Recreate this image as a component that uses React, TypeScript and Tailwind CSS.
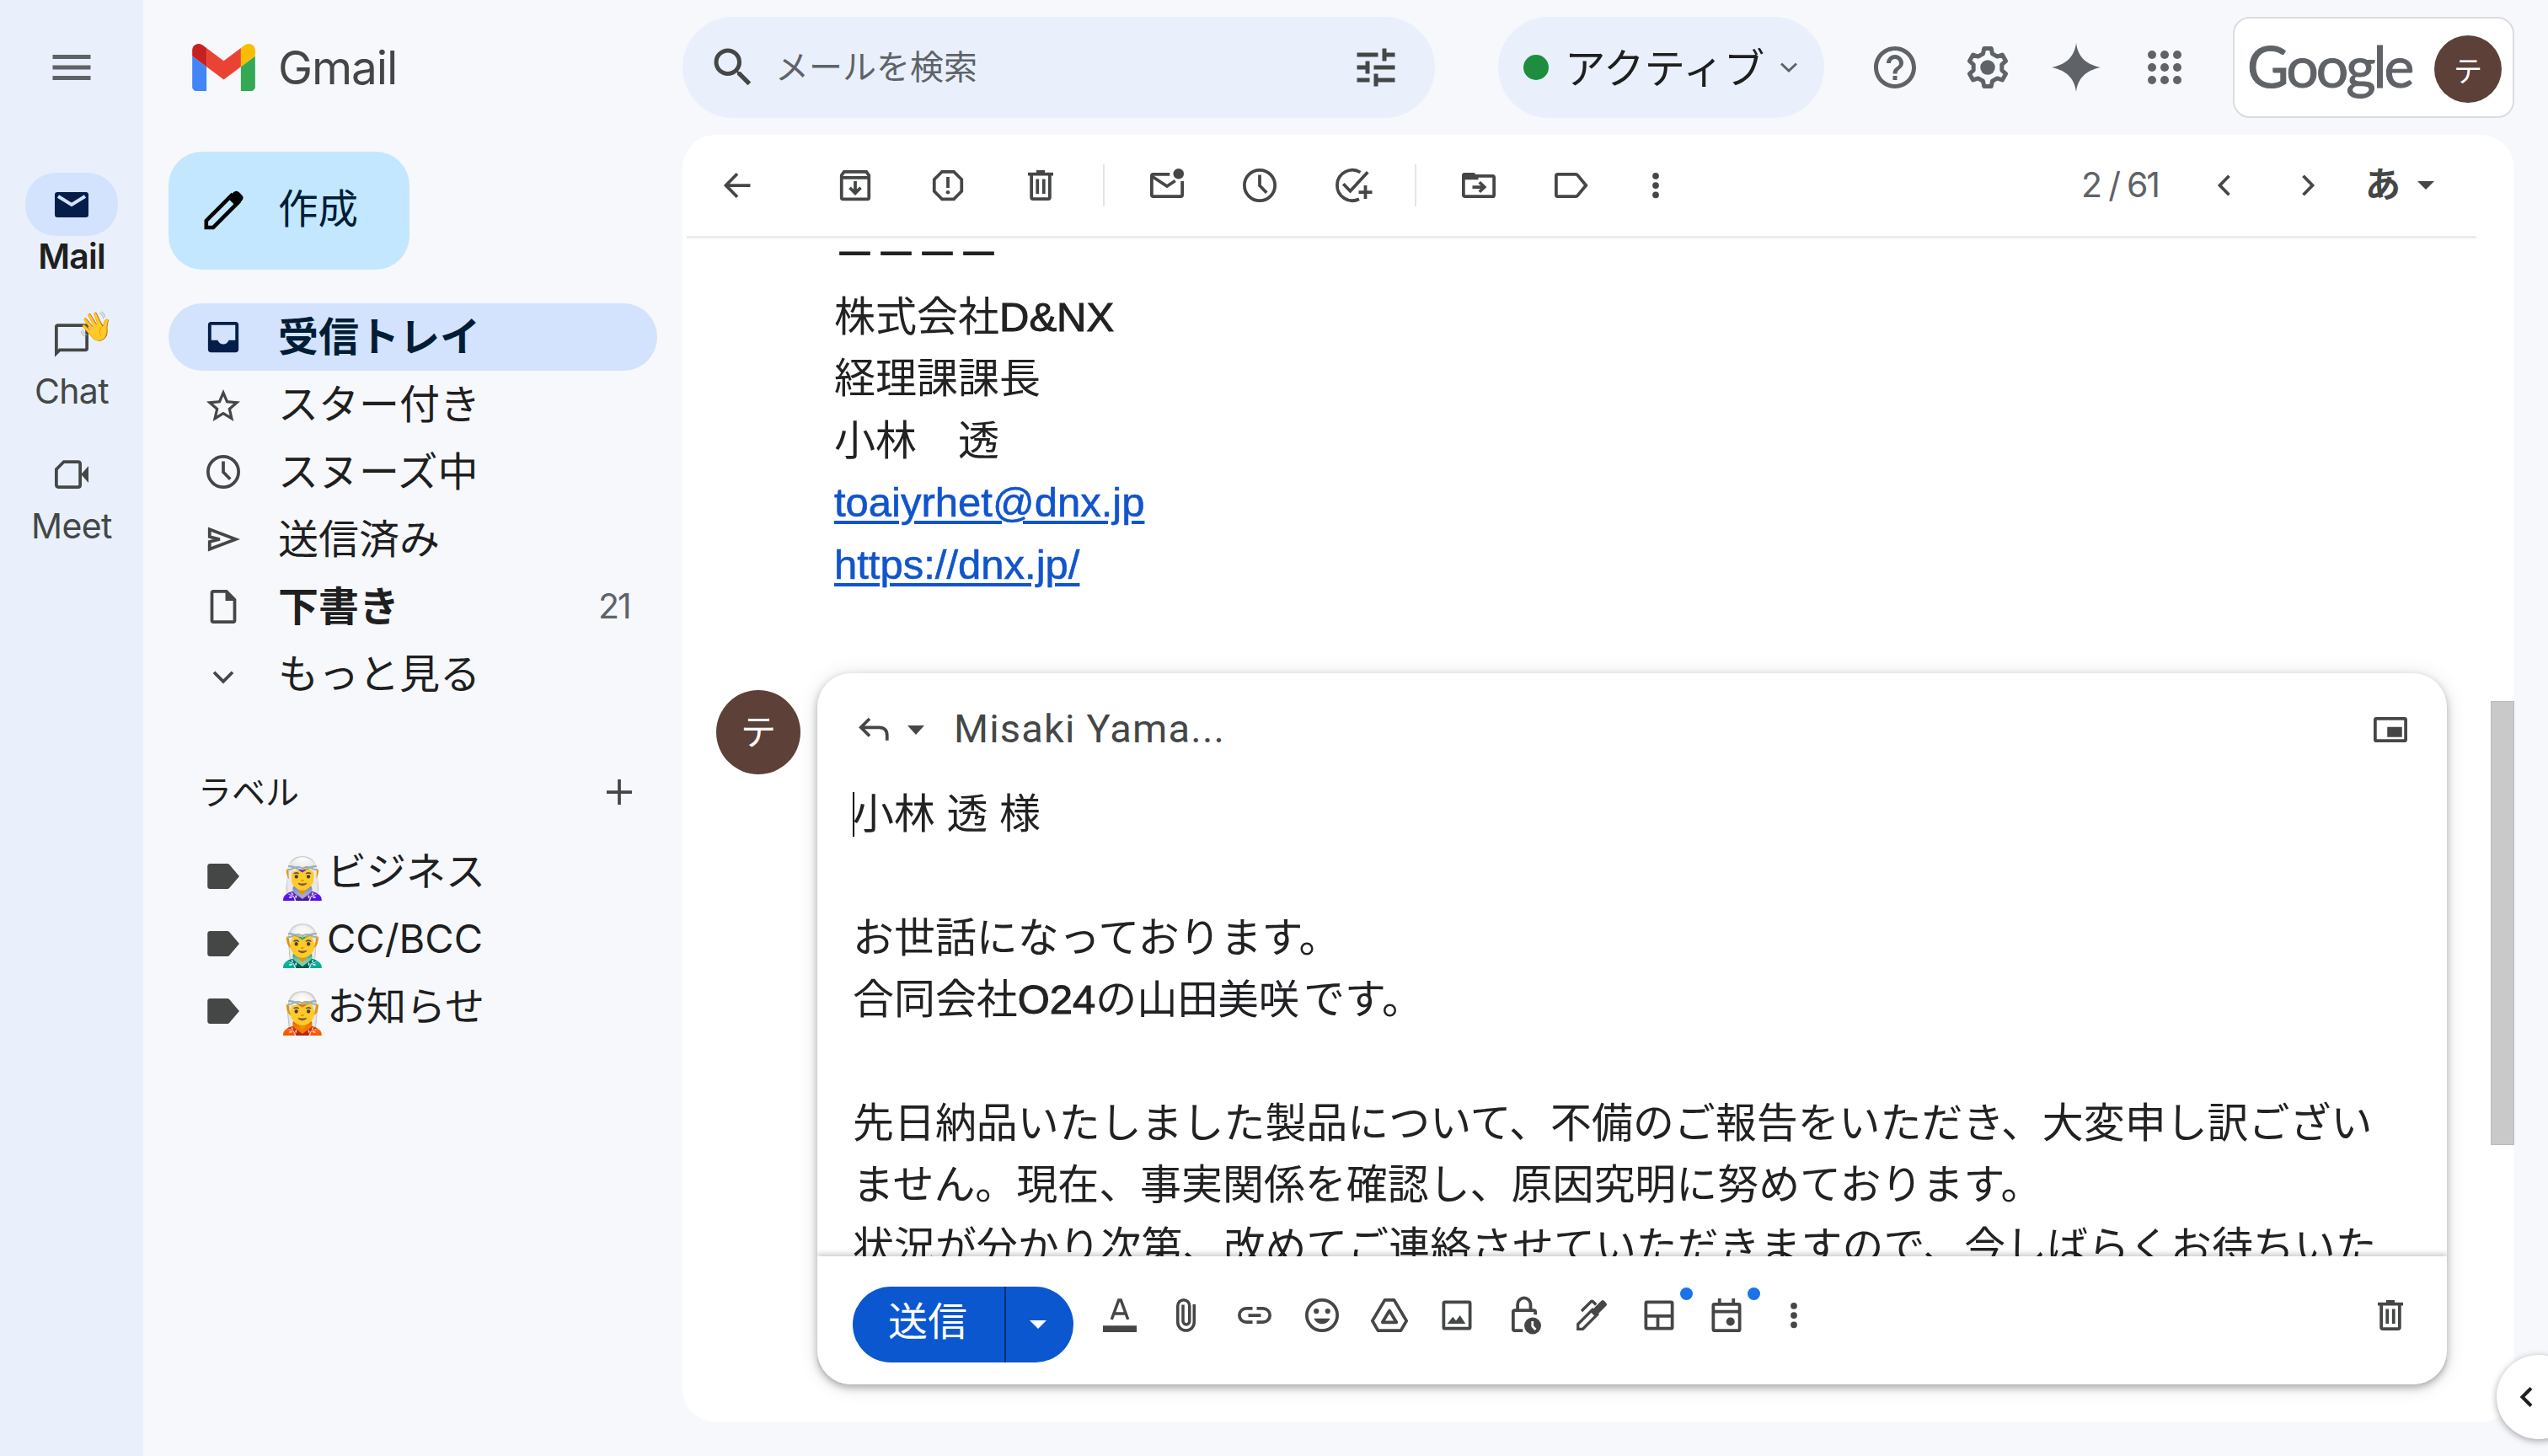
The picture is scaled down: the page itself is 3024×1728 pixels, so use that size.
import React from 'react';
import { MdHelpOutline, MdMenu, MdSearch, MdStarBorder, MdTune } from 'react-icons/md';

type IconProps = { children: React.ReactNode; className?: string };

// 20-unit icon grid drawn at 50px
const Icon: React.FC<IconProps> = ({ children, className = '' }) => (
  <svg
    viewBox="0 0 20 20"
    className={`w-[50px] h-[50px] shrink-0 overflow-visible ${className}`}
    fill="none"
    stroke="currentColor"
    strokeWidth="1.5"
  >
    {children}
  </svg>
);

const ClockIcon = () => (
  <Icon>
    <circle cx="10" cy="10" r="7.25" />
    <path d="M10 5v5.1l3.3 3.4" />
  </Icon>
);

const TrashIcon = () => (
  <Icon>
    <path d="M4 4.6h12M8 3.5h4" />
    <path d="M5.65 4.6v11.1c0 .45.3.75.75.75h7.2c.45 0 .75-.3.75-.75V4.6" />
    <path d="M8.5 7v7M11.5 7v7" />
  </Icon>
);

const MoreIcon = () => (
  <Icon>
    <g fill="currentColor" stroke="none">
      <circle cx="10" cy="5.5" r="1.55" />
      <circle cx="10" cy="10" r="1.55" />
      <circle cx="10" cy="14.5" r="1.55" />
    </g>
  </Icon>
);

const GearIcon = () => (
  <svg viewBox="0 0 24 24" className="w-[60px] h-[60px]" fill="none" stroke="currentColor" strokeWidth="2" strokeLinejoin="round">
    <path d="M9.8 5.5l.5-2.5h3.4l.5 2.5 2.33 1.34 2.41-.81 1.7 2.94-1.91 1.69v2.68l1.91 1.69-1.7 2.94-2.41-.81-2.33 1.34-.5 2.5h-3.4l-.5-2.5-2.33-1.34-2.41.81-1.7-2.94 1.91-1.69v-2.68L3.36 8.97l1.7-2.94 2.41.81z" />
    <circle cx="12" cy="12" r="3.5" fill="currentColor" stroke="none" />
  </svg>
);

const GmailLogo = () => (
  <svg viewBox="52 42 88 66" className="w-[75px] h-[56px]">
    <path fill="#4285f4" d="M58 108h14V74L52 59v43c0 3.32 2.69 6 6 6" />
    <path fill="#34a853" d="M120 108h14c3.32 0 6-2.69 6-6V59l-20 15" />
    <path fill="#fbbc04" d="M120 48v26l20-15v-8c0-7.42-8.47-11.65-14.4-7.2" />
    <path fill="#ea4335" d="M72 74V48l24 18 24-18v26L96 92" />
    <path fill="#c5221f" d="M52 51v8l20 15V48l-5.6-4.2c-5.94-4.45-14.4-.22-14.4 7.2" />
  </svg>
);

const RailItem: React.FC<{ label: string; bold?: boolean; children: React.ReactNode }> = ({ label, bold, children }) => (
  <div className="flex flex-col items-center h-[160px]">
    {children}
    <span
      className={
        bold
          ? 'mt-[4px] h-[40px] leading-[40px] text-[41px] font-semibold text-[#1f1f1f] tracking-[-0.8px]'
          : 'mt-[4px] h-[40px] leading-[40px] text-[41px] text-[#444746] tracking-[-0.6px]'
      }
    >
      {label}
    </span>
  </div>
);

const Rail = () => (
  <aside className="w-[170px] h-full bg-[#e9f0fc] flex flex-col items-center font-['Inter','Noto_Sans_CJK_JP',sans-serif]">
    <div className="h-[205px] pt-[50px]">
      <MdMenu size={60} className="text-[#5f6368]" />
    </div>
    <RailItem label="Mail" bold>
      <div className="w-[110px] h-[75px] rounded-[36px] bg-[#d3e3fd] flex items-center justify-center">
        <Icon className="text-[#041e49]">
          <rect x="2" y="4" width="16" height="12" rx="1.3" fill="currentColor" stroke="none" />
          <path d="M3.6 6l6.4 4 6.4-4" stroke="#d3e3fd" strokeWidth="1.6" />
        </Icon>
      </div>
    </RailItem>
    <RailItem label="Chat">
      <div className="relative w-[110px] h-[75px] flex items-center justify-center text-[#444746]">
        <Icon>
          <path d="M2.75 16.500V4c0-.4.3-.75.75-.75h13c.4 0 .75.35.75.75v10.200c0 .4-.35.75-.75.75H4.300z" />
        </Icon>
        <span className="absolute left-[62px] top-[2px] text-[34px] leading-[40px]">👋</span>
      </div>
    </RailItem>
    <RailItem label="Meet">
      <div className="w-[110px] h-[75px] flex items-center justify-center text-[#444746]">
        <Icon>
          <path d="M6.300 4H13c.6 0 1.050.45 1.050 1.050v9.900c0 .6-.45 1.050-1.050 1.050H3.800c-.6 0-1.050-.45-1.050-1.050V7.600z" />
          <path d="M14.500 10l3.500-4v8z" fill="currentColor" stroke="none" />
        </Icon>
      </div>
    </RailItem>
  </aside>
);

const Avatar: React.FC<{ className: string }> = ({ className }) => (
  <div className={`rounded-full bg-[#5d4037] text-white flex items-center justify-center shrink-0 ${className}`}>テ</div>
);

const Header = () => (
  <header className="h-[160px] flex items-center">
    <div className="w-[640px] pl-[58px] flex items-center">
      <GmailLogo />
      <span className="ml-[27px] text-[55px] leading-[60px] font-['Inter',sans-serif] text-[#444746] tracking-[-1.1px]">Gmail</span>
    </div>
    <div className="w-[893px] h-[120px] rounded-[60px] bg-[#e9f0fc] flex items-center pl-[30px] pr-[40px] text-[#444746]">
      <MdSearch size={60} />
      <span className="ml-[20px] flex-1 pb-[6px] text-[40px] leading-[60px] text-[#5f6368]">メールを検索</span>
      <MdTune size={60} />
    </div>
    <div className="ml-[75px] w-[387px] h-[120px] rounded-[60px] bg-[#e9f0fc] flex items-center pl-[30px]">
      <span className="w-[30px] h-[30px] rounded-full bg-[#1e8e3e]" />
      <span className="ml-[19px] pb-[4px] text-[48.5px] leading-[70px] text-[#1f1f1f]">アクティブ</span>
      <svg viewBox="0 0 20 12" className="ml-[19px] w-[20px] h-[12px]" fill="none" stroke="#5f6368" strokeWidth="3">
        <path d="M1 1.5l9 8.5 9-8.5" />
      </svg>
    </div>
    <div className="ml-[29px] w-[110px] flex justify-center text-[#5f6368]">
      <MdHelpOutline size={60} />
    </div>
    <div className="w-[110px] flex justify-center text-[#5f6368]">
      <GearIcon />
    </div>
    <div className="w-[100px] flex justify-center">
      <svg viewBox="0 0 58 58" className="w-[58px] h-[58px]" fill="#5f6368">
        <path d="M29 0c2 15 10 25 29 29-19 4-27 14-29 29-2-15-10-25-29-29C19 25 27 15 29 0z" />
      </svg>
    </div>
    <div className="w-[110px] flex justify-center">
      <div className="grid grid-cols-3 gap-[5px]">
        {Array.from({ length: 9 }).map((_, i) => (
          <span key={i} className="w-[10px] h-[10px] rounded-full bg-[#5f6368]" />
        ))}
      </div>
    </div>
    <div className="ml-[26px] w-[334px] h-[120px] rounded-[20px] border-2 border-[#dadce0] bg-white flex items-center justify-between pl-[15px] pr-[13px]">
      <span className="pb-[4px] font-['Lato',sans-serif] text-[68px] leading-[80px] text-[#5f6368] tracking-[-3px] [-webkit-text-stroke:1px_#5f6368]">
        Google
      </span>
      <Avatar className="mt-[4px] w-[80px] h-[80px] text-[34px]" />
    </div>
  </header>
);

const navItems = [
  {
    label: '受信トレイ',
    active: true,
    icon: (
      <Icon className="text-[#041e49]">
        <rect x="2.75" y="2.75" width="14.5" height="14.5" rx="1.5" fill="currentColor" stroke="none" />
        <path d="M4.3 4.3h11.4v7.2h-3.1c-.4 1.2-1.4 1.9-2.6 1.9s-2.2-.7-2.6-1.9H4.3z" fill="#d3e3fd" stroke="none" />
      </Icon>
    ),
  },
  { label: 'スター付き', icon: <MdStarBorder size={48} className="mx-px mt-[3px]" /> },
  { label: 'スヌーズ中', icon: <ClockIcon /> },
  {
    label: '送信済み',
    icon: (
      <Icon>
        <path d="M3.5 5.3v3.5l4.8 1.2-4.8 1.2v3.5L15.9 10z" />
      </Icon>
    ),
  },
  {
    label: '下書き',
    bold: true,
    count: 21,
    icon: (
      <Icon>
        <path d="M5.3 2.75h6.2l3.9 4v9.75c0 .4-.35.75-.75.75H5.35c-.4 0-.75-.35-.75-.75v-13c0-.4.3-.75.7-.75z" />
        <path d="M11 2.5v4.7h5z" fill="currentColor" stroke="none" />
      </Icon>
    ),
  },
  {
    label: 'もっと見る',
    icon: (
      <Icon>
        <path d="M5.6 9.1l4.4 4.4 4.4-4.4" />
      </Icon>
    ),
  },
];

const labels = [
  { emoji: '🧝‍♀️', name: 'ビジネス' },
  { emoji: '🧝‍♂️', name: 'CC/BCC' },
  { emoji: '🧝', name: 'お知らせ' },
];

const Sidebar = () => (
  <nav className="w-[640px] pl-[30px] pr-[30px] pt-[20px] text-[#444746]">
    <button className="w-[286px] h-[140px] rounded-[40px] bg-[#c2e7ff] flex items-center pl-[40px] text-[#001d35]">
      <svg viewBox="0 0 24 24" className="w-[50px] h-[50px]" fill="none" stroke="#000" strokeWidth="2.2">
        <path d="M2.3 21.6v-3.9L16.6 3.4l3.9 3.9L6.2 21.6z" />
        <path d="M15.2 4.8l2.8-2.8c.9-.9 1.9-.9 2.8 0l1.3 1.3c.9.9.9 1.9 0 2.8l-2.8 2.8z" fill="#000" strokeWidth="1" />
      </svg>
      <span className="ml-[40px] pb-[10px] text-[47.5px] leading-[70px]">作成</span>
    </button>
    <ul className="mt-[40px]">
      {navItems.map((item) => (
        <li
          key={item.label}
          className={
            item.active
              ? 'w-[580px] h-[80px] rounded-[40px] bg-[#d3e3fd] flex items-center pl-[40px] pr-[32px]'
              : 'w-[580px] h-[80px] flex items-center pl-[40px] pr-[32px]'
          }
        >
          {item.icon}
          <span
            className={
              item.active
                ? 'ml-[40px] pb-[9px] flex-1 text-[48px] leading-[70px] font-bold text-[#001d35]'
                : item.bold
                  ? 'ml-[40px] pb-[9px] flex-1 text-[48px] leading-[70px] font-bold text-[#1f1f1f]'
                  : 'ml-[40px] pb-[9px] flex-1 text-[48px] leading-[70px] text-[#1f1f1f]'
            }
          >
            {item.label}
          </span>
          {item.count && <span className="font-['Inter',sans-serif] text-[41px] tracking-[-1.8px] text-[#5f6368]">{item.count}</span>}
        </li>
      ))}
    </ul>
    <div className="mt-[60px] h-[80px] flex items-center justify-between pl-[35px] pr-[20px]">
      <span className="pb-[4px] text-[40px] text-[#1f1f1f]">ラベル</span>
      <Icon>
        <path d="M10 4v12M4 10h12" />
      </Icon>
    </div>
    <ul className="mt-[20px]">
      {labels.map((label) => (
        <li key={label.name} className="h-[80px] flex items-center pl-[40px]">
          <Icon>
            <path
              d="M3.7 4h8.1c.6 0 1 .2 1.3.7L17.6 10l-4.5 5.3c-.3.5-.7.7-1.3.7H3.7c-.7 0-1.2-.5-1.2-1.2V5.200C2.5 4.500 3 4 3.700 4z"
              fill="currentColor"
              stroke="none"
            />
          </Icon>
          <span className="ml-[39px] w-[59px] pb-[5px] text-[48px] leading-[60px] whitespace-nowrap">{label.emoji}</span>
          <span className="pb-[12px] text-[47px] leading-[60px] text-[#1f1f1f] font-['Inter','Noto_Sans_CJK_JP',sans-serif]">{label.name}</span>
        </li>
      ))}
    </ul>
  </nav>
);

const Tool: React.FC<{ children: React.ReactNode }> = ({ children }) => (
  <div className="w-[110px] flex justify-center">{children}</div>
);

const Divider = () => (
  <div className="w-[40px] flex justify-center">
    <span className="w-[2px] h-[50px] bg-[#e4e5e8]" />
  </div>
);

const Toolbar = () => (
  <div className="mx-[5px] mr-[45px] h-[123px] shrink-0 border-b-[3px] border-[#ececec] flex items-center pr-[50px] text-[#444746]">
    <div className="w-[145px] pl-[35px]">
      <Icon>
        <path d="M16.2 10H4.7M10 4.5L4.6 10l5.4 5.5" />
      </Icon>
    </div>
    <Tool>
      <Icon>
        <path d="M4.7 3.55h10.6l1.2 1.7v10.5c0 .4-.35.75-.75.75H4.25c-.4 0-.75-.35-.75-.75V5.25z" />
        <path d="M3.5 6.3h13M10 8v5.2M7.4 11.1l2.6 2.6 2.6-2.6" />
      </Icon>
    </Tool>
    <Tool>
      <Icon>
        <path d="M7.2 3.5h5.6l3.7 3.7v5.6l-3.7 3.7H7.2l-3.7-3.7V7.2z" />
        <path d="M10 6v5.2" />
        <circle cx="10" cy="13.3" r=".9" fill="currentColor" stroke="none" />
      </Icon>
    </Tool>
    <Tool>
      <TrashIcon />
    </Tool>
    <Divider />
    <Tool>
      <Icon>
        <path d="M11.3 4.75H3.5c-.4 0-.75.35-.75.75v9c0 .4.35.75.75.75h13c.4 0 .75-.35.75-.75V8" />
        <path d="M3 5.8l7 4.6 3.9-2.6" />
        <circle cx="15.5" cy="4.5" r="2.5" fill="currentColor" stroke="none" />
      </Icon>
    </Tool>
    <Tool>
      <ClockIcon />
    </Tool>
    <Tool>
      <Icon>
        <path d="M13.8 3.8A7.25 7.25 0 1 0 13.2 16.5" />
        <path d="M5.7 9.3l3.3 3.4 8.3-9M16.2 10v6.4M13 13.2h6.4" />
      </Icon>
    </Tool>
    <Divider />
    <Tool>
      <Icon>
        <rect x="2.75" y="5.5" width="14.5" height="9.75" rx=".7" />
        <path d="M2 7.3V5.2C2 4.5 2.5 4 3.2 4h4.6l2 2v1.3z" fill="currentColor" stroke="none" />
        <path d="M7 10.8h5.2M10.3 8.5l2.4 2.3-2.4 2.3" />
      </Icon>
    </Tool>
    <Tool>
      <Icon>
        <path d="M3.5 4.75h8.6c.35 0 .6.15.8.4l4 4.85-4 4.85c-.2.25-.45.4-.8.4H3.5c-.4 0-.75-.35-.75-.75v-9c0-.4.35-.75.75-.75z" />
      </Icon>
    </Tool>
    <div className="w-[90px] flex justify-center">
      <MoreIcon />
    </div>
    <span className="ml-auto w-[92px] mr-[53px] whitespace-nowrap font-['Inter',sans-serif] text-[41px] tracking-[-2.2px] text-[#5f6368]">2 / 61</span>
    <Icon>
      <path d="M12.2 5.5L7.8 10l4.4 4.5" />
    </Icon>
    <Icon className="ml-[49px]">
      <path d="M7.8 5.5l4.4 4.5-4.4 4.5" />
    </Icon>
    <div className="ml-[43px] w-[43px] text-[42px] leading-[44px] font-bold">あ</div>
    <svg viewBox="0 0 20 10" className="ml-[19px] w-[20px] h-[10px]" fill="#444746">
      <path d="M0 0h20L10 10z" />
    </svg>
  </div>
);

const Signature = () => (
  <div className="h-[516px] overflow-hidden pl-[180px] shrink-0">
    <div className="-mt-[17px] text-[49px] leading-[73.5px] text-[#222]">
      <p className="[-webkit-text-stroke:1px_#222]">－－－－</p>
      <p>
        株式会社<span className="[-webkit-text-stroke:1px_#222]">D&amp;NX</span>
      </p>
      <p>経理課課長</p>
      <p>小林　透</p>
      <p>
        <a href="#" className="text-[#1155cc] underline decoration-[4px] underline-offset-[5px] [-webkit-text-stroke:0.6px_#1155cc]">toaiyrhet@dnx.jp</a>
      </p>
      <p>
        <a href="#" className="text-[#1155cc] underline decoration-[4px] underline-offset-[5px] [-webkit-text-stroke:0.6px_#1155cc]">https://dnx.jp/</a>
      </p>
    </div>
  </div>
);

const ComposeBar = () => (
  <div className="relative h-[152px] shrink-0 rounded-b-[40px] bg-white flex items-start pl-[42px] pr-[42px] pt-[36px] text-[#444746] shadow-[0_-3px_6px_rgba(0,0,0,0.2)] [clip-path:inset(-20px_0_0_0)]">
    <div className="h-[90px] w-[262px] rounded-[45px] bg-[#0b57d0] flex items-center text-white">
      <span className="w-[180px] pl-[42px] text-[47px] leading-[80px] pb-[6px]">送信</span>
      <span className="w-[2px] h-full bg-[#062e6f]" />
      <svg viewBox="0 0 20 10" className="ml-[28px] w-[20px] h-[10px]" fill="#fff">
        <path d="M0 0h20L10 10z" />
      </svg>
    </div>
    <div className="ml-[15px] mt-[9px] flex items-center">
      {composeTools.map((tool, i) => (
        <div key={i} className="relative w-[80px] flex justify-center">
          <Icon>{tool.icon}</Icon>
          {tool.badge && <span className="absolute right-0 -top-[8px] w-[15px] h-[15px] rounded-full bg-[#1a73e8]" />}
        </div>
      ))}
      <div className="w-[80px] flex justify-center">
        <MoreIcon />
      </div>
    </div>
    <div className="ml-auto mt-[9px]">
      <TrashIcon />
    </div>
  </div>
);

const composeTools = [
  {
    icon: (
      <>
        <rect x="2" y="14.9" width="16" height="3.1" fill="currentColor" stroke="none" />
        <path d="M6.1 12L9.5 2.8h1L13.9 12M7.2 9.2h5.6" strokeWidth="1.4" />
      </>
    ),
  },
  {
    icon: (
      <path d="M13.3 4.8v8.5a3.9 3.9 0 0 1-7.8 0V5.5a2.8 2.8 0 0 1 5.6 0v7.3a1.55 1.55 0 0 1-3.1 0V5" strokeWidth="1.4" />
    ),
  },
  {
    icon: <path d="M9 6.75H6a3.25 3.25 0 0 0 0 6.5h3M11 6.75h3a3.25 3.25 0 0 1 0 6.5h-3M7 10h6" />,
  },
  {
    icon: (
      <>
        <circle cx="10" cy="10" r="7.25" />
        <g fill="currentColor" stroke="none">
          <circle cx="7.3" cy="8" r="1.25" />
          <circle cx="12.7" cy="8" r="1.25" />
          <path d="M6.2 11.5h7.6c-.6 1.6-2 2.6-3.8 2.6s-3.2-1-3.8-2.6z" />
        </g>
      </>
    ),
  },
  {
    icon: (
      <>
        <path d="M7.8 2.75h4.4l5.9 9.9-2.7 4.6H4.6l-2.7-4.6z" strokeLinejoin="round" />
        <path d="M10 7.8l-3.3 5.5h6.6z" strokeLinejoin="round" />
      </>
    ),
  },
  {
    icon: (
      <>
        <rect x="3.75" y="3.75" width="12.5" height="12.5" rx=".6" />
        <path d="M5.5 14l2.6-3.3 1.5 1.9 1.9-2.6 2.6 4z" fill="currentColor" stroke="none" />
      </>
    ),
  },
  {
    icon: (
      <>
        <path d="M9.3 17.25H5.5c-.4 0-.75-.35-.75-.75V8.4c0-.4.35-.75.75-.75h9c.4 0 .75.35.75.75v1.3" />
        <path d="M6.85 7.6V4.7a3.08 3.08 0 0 1 6.15 0v2.9" />
        <circle cx="14" cy="15" r="4" fill="currentColor" stroke="none" />
        <path d="M13.9 12.8v2.4l1.5 1.6" stroke="#fff" strokeWidth="1.1" />
      </>
    ),
  },
  {
    icon: (
      <>
        <path d="M3.5 16.5v-2.3l6.9-6.9 2.3 2.3-6.9 6.9z" strokeWidth="1.3" />
        <path d="M9.4 8.3l5.2-5.2c.4-.4.9-.4 1.300 0l1 1.100c.4.4.4.9 0 1.300l-5.200 5.200z" fill="currentColor" stroke="none" />
        <path d="M5.200 8l4.500-4.500c.3-.3.6-.3.9 0l1.500 1.500" strokeWidth="1.3" />
      </>
    ),
  },
  {
    badge: true,
    icon: (
      <>
        <rect x="3.75" y="3.75" width="12.5" height="12.5" rx=".6" />
        <path d="M3.5 10.3h13M9.4 10.3v6" />
      </>
    ),
  },
  {
    badge: true,
    icon: (
      <>
        <rect x="3.75" y="4.75" width="12.5" height="12.5" rx=".6" />
        <path d="M3.5 8.2h13M6.7 2v3M13.3 2v3" />
        <circle cx="11.9" cy="13" r="2" fill="currentColor" stroke="none" />
      </>
    ),
  },
];

const Composer = () => (
  <div className="w-[1934px] h-[844px] rounded-[40px] bg-white flex flex-col shadow-[0_4px_10px_rgba(0,0,0,0.28),0_2px_24px_rgba(0,0,0,0.12)]">
    <div className="h-[140px] pt-[42px] pl-[42px] pr-[42px] flex items-start text-[#444746]">
      <Icon>
        <path d="M8 4.8L3.9 8.9 8 13M3.9 8.9h8.6c2.6 0 3.8 1.5 3.8 3.7v2.5" />
      </Icon>
      <svg viewBox="0 0 20 11" className="ml-[15px] mt-[20px] w-[20px] h-[11px]" fill="#444746">
        <path d="M0 0h20L10 11z" />
      </svg>
      <span className="ml-[35px] -mt-px font-['Roboto',sans-serif] text-[47px] leading-[50px] tracking-[1.2px]">Misaki Yama...</span>
      <Icon className="ml-auto">
        <rect x="2.75" y="4.75" width="14.5" height="10.5" rx=".6" />
        <rect x="8.5" y="8.7" width="7" height="4.8" fill="currentColor" stroke="none" />
      </Icon>
    </div>
    <div className="flex-1 min-h-0 -mt-[9px] pl-[42px] overflow-hidden text-[48.95px] leading-[73.4px] text-[#222] whitespace-nowrap">
      <p className="flex items-center">
        <span className="w-[2px] h-[53px] -mr-[2px] bg-black" />
        小林 透 様
      </p>
      <p>&nbsp;</p>
      <p>お世話になっております。</p>
      <p>
        合同会社<span className="[-webkit-text-stroke:1px_#222]">O24</span>の
        <span className="text-[#202124] text-[48.2px] mr-[5px]">山田美咲</span>です。
      </p>
      <p>&nbsp;</p>
      <p>先日納品いたしました製品について、不備のご報告をいただき、大変申し訳ござい</p>
      <p>ません。現在、事実関係を確認し、原因究明に努めております。</p>
      <p>状況が分かり次第、改めてご連絡させていただきますので、今しばらくお待ちいた</p>
    </div>
    <ComposeBar />
  </div>
);

const MailPanel = () => (
  <main className="w-[2174px] h-[1528px] rounded-[40px] bg-white flex flex-col font-['Liberation_Sans','Noto_Sans_CJK_JP',sans-serif]">
    <Toolbar />
    <Signature />
    <div className="flex pl-[40px]">
      <Avatar className="mt-[20px] w-[100px] h-[100px] text-[42px]" />
      <div className="ml-[20px]">
        <Composer />
      </div>
      <div className="ml-[52px] mt-[33px] w-[28px] h-[527px] bg-[#c9c9c9] border border-[#bcbcbc]" />
    </div>
  </main>
);

const App: React.FC = () => (
  <div className="relative w-[3024px] h-[1728px] overflow-hidden bg-[#f6f8fc] flex font-['Noto_Sans_CJK_JP',sans-serif]">
    <Rail />
    <div className="flex-1 flex flex-col">
      <Header />
      <div className="flex">
        <Sidebar />
        <MailPanel />
      </div>
    </div>
    <button className="absolute left-[2963px] top-[1608px] w-[100px] h-[100px] rounded-full bg-white shadow-[0_2px_8px_rgba(0,0,0,0.35)]">
      <svg viewBox="0 0 16 24" className="ml-[27px] w-[16px] h-[24px]" fill="none" stroke="#1f1f1f" strokeWidth="4">
        <path d="M14 1.5L3.5 12 14 22.5" />
      </svg>
    </button>
  </div>
);

export default App;
